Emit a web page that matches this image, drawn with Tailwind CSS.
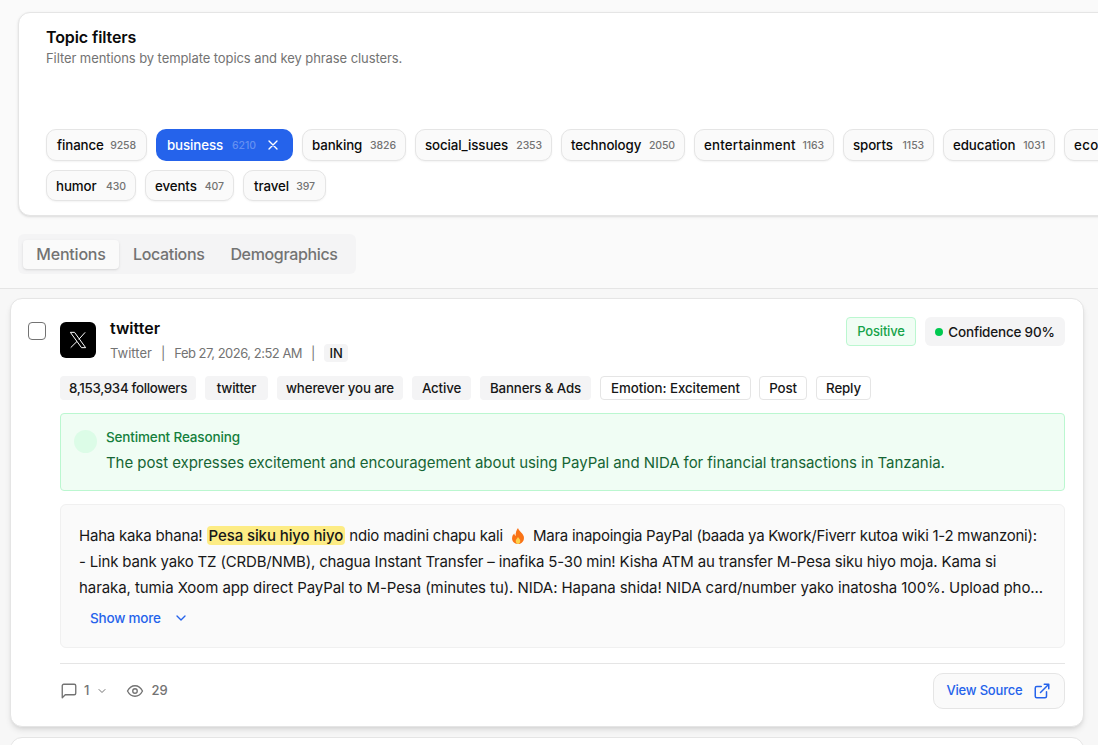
<!DOCTYPE html>
<html lang="en">
<head>
    <meta charset="UTF-8">
    <meta name="viewport" content="width=device-width, initial-scale=1.0">
    <title>Mentions</title>
    <script src="https://cdn.jsdelivr.net/npm/@tailwindcss/browser@4"></script>
</head>
<body class="bg-[#fafafa] font-['Inter',sans-serif] text-[#0a0a0a] h-[745px] overflow-hidden">
    <!-- Topic filters -->
    <div class="pt-3 pl-[18px]">
        <div class="w-[1240px] h-[204px] bg-white border border-[#e5e5e5] rounded-xl shadow-sm pt-[15px] pl-[27px]">
            <h2 class="text-[16px] leading-[18px] font-semibold tracking-[-0.1px]">Topic filters</h2>
            <p class="text-[13px] leading-[20px] text-[#737373] tracking-[-0.08px] mt-[2px]">Filter mentions by template topics and key phrase clusters.</p>
            <div class="mt-[61px] flex flex-col gap-[9px] text-[13.3px] font-medium tracking-[-0.1px]">
                <div class="flex gap-[9px]">
                    <div class="w-[101px] h-[32px] pt-[2px] px-[10px] flex items-center justify-between bg-[#fafafa] border border-[#e5e5e5] rounded-[10px] shadow-xs"><span>finance</span><span class="text-[10.5px] text-[#737373]">9258</span></div>
                    <div class="w-[137px] h-[32px] pt-[2px] pl-[11px] pr-[12px] flex items-center justify-between bg-[#2563eb] rounded-[10px]"><span class="text-white">business</span><span class="text-[10.5px] text-white/30">6210</span>
                        <svg class="w-4 h-4 -mt-[2px] text-white" viewBox="0 0 24 24" fill="none" stroke="currentColor" stroke-width="2" stroke-linecap="round"><path d="M18 6 6 18M6 6l12 12"/></svg></div>
                    <div class="w-[104px] h-[32px] pt-[2px] px-[9px] flex items-center justify-between bg-[#fafafa] border border-[#e5e5e5] rounded-[10px] shadow-xs"><span>banking</span><span class="text-[10.5px] text-[#737373]">3826</span></div>
                    <div class="w-[137px] h-[32px] pt-[2px] px-[9px] flex items-center justify-between bg-[#fafafa] border border-[#e5e5e5] rounded-[10px] shadow-xs"><span>social_issues</span><span class="text-[10.5px] text-[#737373]">2353</span></div>
                    <div class="w-[124px] h-[32px] pt-[2px] px-[9px] flex items-center justify-between bg-[#fafafa] border border-[#e5e5e5] rounded-[10px] shadow-xs"><span>technology</span><span class="text-[10.5px] text-[#737373]">2050</span></div>
                    <div class="w-[140px] h-[32px] pt-[2px] px-[9px] flex items-center justify-between bg-[#fafafa] border border-[#e5e5e5] rounded-[10px] shadow-xs"><span class="tracking-[0.2px]">entertainment</span><span class="text-[10.5px] text-[#737373]">1163</span></div>
                    <div class="w-[91px] h-[32px] pt-[2px] px-[9px] flex items-center justify-between bg-[#fafafa] border border-[#e5e5e5] rounded-[10px] shadow-xs"><span>sports</span><span class="text-[10.5px] text-[#737373]">1153</span></div>
                    <div class="w-[112px] h-[32px] pt-[2px] px-[9px] flex items-center justify-between bg-[#fafafa] border border-[#e5e5e5] rounded-[10px] shadow-xs"><span>education</span><span class="text-[10.5px] text-[#737373]">1031</span></div>
                    <div class="w-[112px] h-[32px] pt-[2px] px-[9px] flex items-center justify-between bg-[#fafafa] border border-[#e5e5e5] rounded-[10px] shadow-xs"><span class="tracking-[0.4px]">economy</span><span class="text-[10.5px] text-[#737373]">912</span></div>
                </div>
                <div class="flex gap-[9px]">
                    <div class="w-[90px] h-[31px] pt-[2px] px-[9px] flex items-center justify-between bg-[#fafafa] border border-[#e5e5e5] rounded-[10px] shadow-xs"><span>humor</span><span class="text-[10.5px] text-[#737373]">430</span></div>
                    <div class="w-[89px] h-[31px] pt-[2px] px-[9px] flex items-center justify-between bg-[#fafafa] border border-[#e5e5e5] rounded-[10px] shadow-xs"><span>events</span><span class="text-[10.5px] text-[#737373]">407</span></div>
                    <div class="w-[83px] h-[31px] pt-[2px] px-[10px] flex items-center justify-between bg-[#fafafa] border border-[#e5e5e5] rounded-[10px] shadow-xs"><span>travel</span><span class="text-[10.5px] text-[#737373]">397</span></div>
                </div>
            </div>
        </div>
    </div>

    <!-- Tabs -->
    <div class="mt-[18px] ml-[18px] w-[338px] h-[40px] bg-[#f4f4f5] rounded-md flex items-center pl-[5px] text-[16px] font-medium text-[#737373] tracking-[-0.2px]">
        <div class="w-[96px] h-[29px] bg-[#fafafa] rounded-sm shadow-sm flex items-center justify-center">Mentions</div>
        <div class="ml-[14px] tracking-[-0.35px]">Locations</div>
        <div class="ml-[26px] tracking-[-0.35px]">Demographics</div>
    </div>

    <!-- Mentions list -->
    <div class="mt-[14px] border-t border-[#e5e5e5] bg-[#f7f7f7] pt-[9px] px-[10px]">
        <div class="w-[1074px] h-[429px] bg-white border border-[#e5e5e5] rounded-xl shadow-md pt-[23px] pr-[18px] flex">
            <div class="w-[49px] pl-[17px] shrink-0">
                <div class="w-[18px] h-[18px] border border-[#737373] rounded-[4px] bg-white"></div>
            </div>
            <div class="flex-1 min-w-0">
                <!-- Header -->
                <div class="flex items-start justify-between h-[50px]">
                    <div class="flex">
                        <div class="w-9 h-9 bg-black rounded-md flex items-center justify-center">
                            <svg class="w-5 h-5 text-white" viewBox="0 0 24 24" fill="none" stroke="currentColor" stroke-width="1.2"><path d="M2.800 2.800h5l13.400 18.400h-5zM20.600 2.800l-7.700 8.500M10.800 13.700 3.200 21.200"/></svg>
                        </div>
                        <div class="ml-[14px] -mt-[4px]">
                            <div class="text-[16px] leading-[20px] font-semibold">twitter</div>
                            <div class="flex items-center mt-[6px] text-[13px] leading-[18px] text-[#737373]">
                                <span>Twitter</span><span class="mx-[9px]">|</span><span class="tracking-[-0.5px]">Feb 27, 2026, 2:52 AM</span><span class="mx-[9px]">|</span>
                                <span class="h-[18px] px-[5px] bg-[#f4f4f5] rounded text-[13px] font-medium text-[#171717] flex items-center">IN</span>
                            </div>
                        </div>
                    </div>
                    <div class="flex gap-[9px] -mt-[5px]">
                        <div class="h-[29px] w-[70px] pt-px flex items-center justify-center bg-[#f0fdf4] border border-[#bbf7d0] rounded text-[13px] font-medium text-[#16a34a] tracking-[-0.2px]">Positive</div>
                        <div class="h-[29px] w-[140px] pt-px flex items-center justify-center gap-[5px] bg-[#f4f4f5] rounded-md text-[13.5px] font-medium text-[#171717] tracking-[-0.2px]"><span class="w-2 h-2 rounded-full bg-[#00c950]"></span>Confidence 90%</div>
                    </div>
                </div>
                <!-- Tags -->
                <div class="flex gap-[9px] text-[13.3px] font-medium text-[#171717] tracking-[-0.15px] mt-[4px]">
                    <span class="w-[136px] h-6 pt-px flex items-center justify-center bg-[#f4f4f5] rounded tracking-[-0.3px]">8,153,934 followers</span>
                    <span class="w-[63px] h-6 pt-px flex items-center justify-center bg-[#f4f4f5] rounded">twitter</span>
                    <span class="w-[126px] h-6 pt-px flex items-center justify-center bg-[#f4f4f5] rounded">wherever you are</span>
                    <span class="w-[59px] h-6 pt-px flex items-center justify-center bg-[#f4f4f5] rounded">Active</span>
                    <span class="w-[111px] h-6 pt-px flex items-center justify-center bg-[#f4f4f5] rounded">Banners &amp; Ads</span>
                    <span class="w-[151px] h-6 pt-px flex items-center justify-center border border-[#e5e5e5] rounded tracking-[-0.05px]">Emotion: Excitement</span>
                    <span class="w-[48px] -ml-px h-6 pt-px flex items-center justify-center border border-[#e5e5e5] rounded">Post</span>
                    <span class="w-[55px] h-6 pt-px flex items-center justify-center border border-[#e5e5e5] rounded">Reply</span>
                </div>
                <!-- Sentiment -->
                <div class="mt-[13px] h-[78px] bg-[#f0fdf4] border border-[#bbf7d0] rounded flex pl-[13px] pt-[16px]">
                    <div class="w-[23px] h-[23px] rounded-full bg-[#dcfce7] shrink-0"></div>
                    <div class="ml-[9px] -mt-[2px]">
                        <div class="text-[13.5px] leading-[18px] font-medium text-[#15803d] tracking-[-0.15px]">Sentiment Reasoning</div>
                        <p class="mt-[6px] text-[15px] leading-[22px] text-[#166534] tracking-[-0.06px] whitespace-nowrap">The post expresses excitement and encouragement about using PayPal and NIDA for financial transactions in Tanzania.</p>
                    </div>
                </div>
                <!-- Post body -->
                <div class="mt-[13px] h-[144px] bg-[#fafafa] border border-[#f0f0f0] rounded-md pl-[18px] pt-[18px]">
                    <p class="text-[15px] leading-[26px] text-[#171717] tracking-[-0.2px] whitespace-nowrap">Haha kaka bhana! <span class="bg-[#fdec84] rounded-[4px] px-[2px] font-medium tracking-[-0.1px]">Pesa siku hiyo hiyo</span> ndio madini chapu kali <svg class="inline-block w-[14px] h-[16px] mx-[4px] -mt-[2px]" viewBox="0 0 14 16"><path fill="#f97316" d="M7 0c.6 2.600 4.800 5 5.800 8.400C13.700 12.400 10.800 16 7 16S.4 12.800 1.200 9c.3-1.500 1.200-2.500 2-3.400.2 1.200.7 2 1.500 2.400C4.400 5 5.300 2 7 0z"/><path fill="#fcd34d" d="M7 9c.4 1.200 2.300 2 2.300 4 0 1.300-1 3-2.300 3s-2.300-1.500-2.300-3C4.700 11.500 6.300 10.500 7 9z"/></svg> <span class="tracking-[-0.26px]">Mara inapoingia PayPal (baada ya Kwork/Fiverr kutoa wiki 1-2 mwanzoni):</span><br><span class="tracking-[-0.17px]">- Link bank yako TZ (CRDB/NMB), chagua Instant Transfer – inafika 5-30 min! Kisha ATM au transfer M-Pesa siku hiyo moja. Kama si</span><br><span class="tracking-[-0.08px]">haraka, tumia Xoom app direct PayPal to M-Pesa (minutes tu). NIDA: Hapana shida! NIDA card/number yako inatosha 100%. Upload pho...</span></p>
                    <div class="mt-[7px] ml-[11px] flex items-center text-[13.5px] leading-[20px] font-medium text-[#2563eb] tracking-[-0.2px]">Show more
                        <svg class="w-4 h-4 ml-[12px]" viewBox="0 0 24 24" fill="none" stroke="currentColor" stroke-width="2" stroke-linecap="round" stroke-linejoin="round"><path d="m6 9 6 6 6-6"/></svg>
                    </div>
                </div>
                <!-- Footer -->
                <div class="mt-[15px] border-t border-[#e5e5e5] pt-[9px] flex items-center justify-between">
                    <div class="flex items-center text-[13px] text-[#737373] font-medium">
                        <svg class="w-[18px] h-[18px]" viewBox="0 0 24 24" fill="none" stroke="currentColor" stroke-width="1.8" stroke-linejoin="round"><path d="M3 21V5a2 2 0 0 1 2-2h14a2 2 0 0 1 2 2v10a2 2 0 0 1-2 2H7z"/></svg>
                        <span class="ml-[6px]">1</span>
                        <svg class="w-3 h-3 ml-[7px]" viewBox="0 0 24 24" fill="none" stroke="currentColor" stroke-width="2" stroke-linecap="round" stroke-linejoin="round"><path d="m6 9 6 6 6-6"/></svg>
                        <svg class="w-[18px] h-[18px] ml-[18px]" viewBox="0 0 24 24" fill="none" stroke="currentColor" stroke-width="1.8" stroke-linecap="round" stroke-linejoin="round"><path d="M2 12s3.600-7 10-7 10 7 10 7-3.600 7-10 7-10-7-10-7z"/><circle cx="12" cy="12" r="3"/></svg>
                        <span class="ml-[7px]">29</span>
                    </div>
                    <div class="h-9 w-[132px] flex items-center justify-center gap-[11px] bg-[#fafafa] border border-[#e5e5e5] rounded-[10px] text-[13px] font-medium text-[#2563eb] tracking-[-0.2px]">View Source
                        <svg class="w-[18px] h-[18px]" viewBox="0 0 24 24" fill="none" stroke="currentColor" stroke-width="2" stroke-linecap="round" stroke-linejoin="round"><path d="M15 3h6v6M10 14 21 3M18 13v6a2 2 0 0 1-2 2H5a2 2 0 0 1-2-2V8a2 2 0 0 1 2-2h6"/></svg>
                    </div>
                </div>
            </div>
        </div>
        <!-- Next card, cut off by the fold -->
        <div class="mt-[10px] w-[1074px] h-[60px] bg-white border border-[#e5e5e5] rounded-xl"></div>
    </div>
</body>
</html>
